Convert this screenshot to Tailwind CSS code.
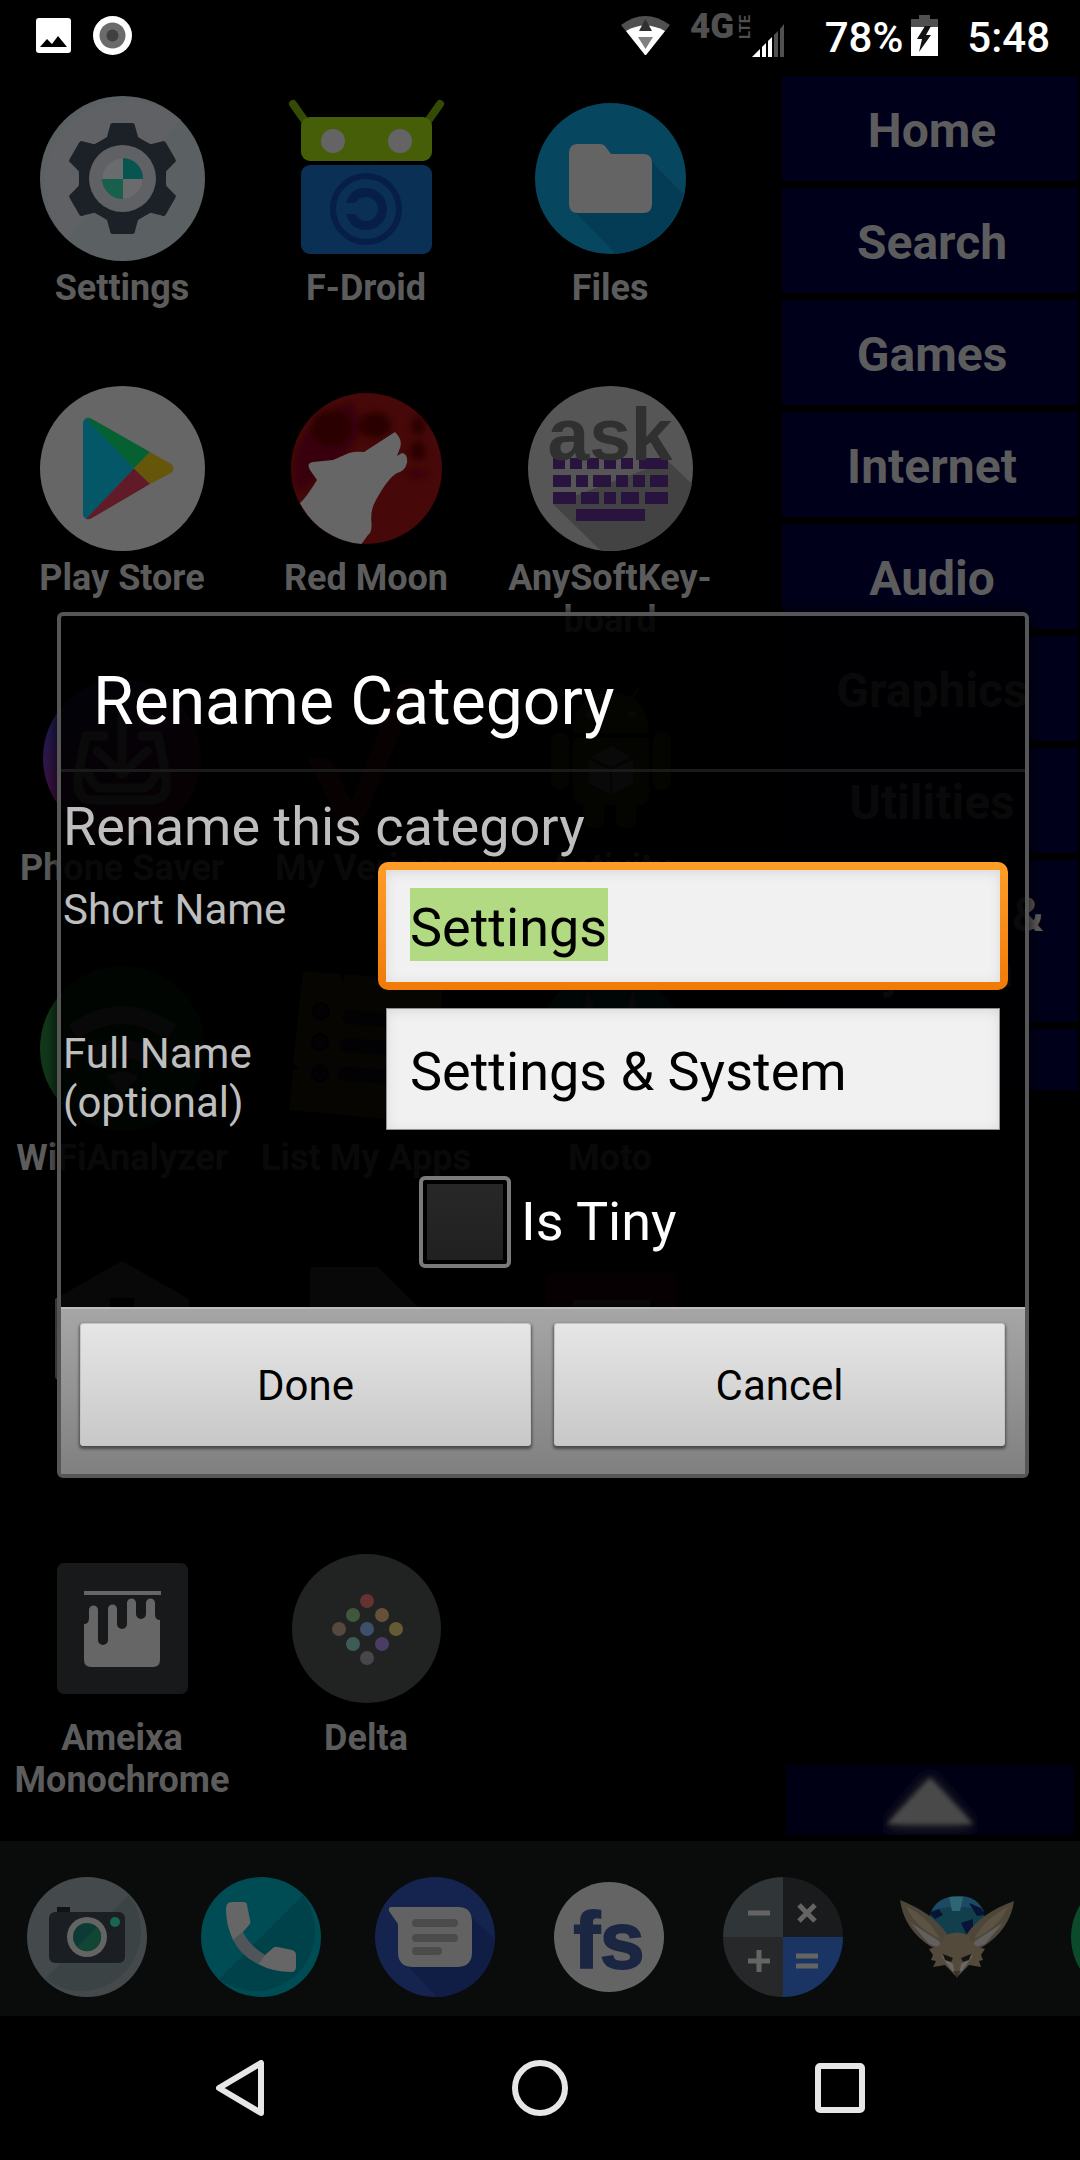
<!DOCTYPE html>
<html lang="en">
<head>
<meta charset="utf-8">
<meta name="viewport" content="width=device-width, initial-scale=1">
<title>Rename Category</title>
<script src="https://cdn.jsdelivr.net/npm/@tailwindcss/browser@4"></script>
</head>
<body class="flex min-h-screen flex-col overflow-x-hidden bg-black font-['Roboto',sans-serif]">

<!-- Status bar -->
<header class="flex h-[74px] shrink-0 items-start justify-between bg-black pr-[30px] pl-9 text-white">
  <div class="flex items-center gap-[22px] pt-4">
    <svg class="size-[35px]" viewBox="0 0 35 35"><rect width="35" height="35" rx="3" fill="#fff"/><path d="M4 29 11 21 16 26 22 18 31 29Z" fill="#000"/></svg>
    <svg class="size-[39px]" viewBox="0 0 39 39"><circle cx="19.500" cy="19.500" r="19.500" fill="#fff"/><circle cx="19.500" cy="19.500" r="13" fill="#6b6b6b"/><circle cx="19.500" cy="19.500" r="6" fill="#404040"/></svg>
  </div>
  <div class="flex items-start">
    <svg class="mt-4 h-[39px] w-[49px]" viewBox="0 0 49 39"><path d="M0 9Q24 -9 49 9L25 39H24Z" fill="#505050"/><path d="M5 15Q24 4 44 15L25 39H24Z" fill="#fff"/><path d="M18 15 24.500 3 31 15Z" fill="#303030"/><path d="M17 21H32L24.500 33Z" fill="#808080"/></svg>
    <svg class="mt-2 ml-[18px] h-[50px] w-[100px]" viewBox="-2 0 100 50"><text x="0" y="30" font-size="35" font-weight="900" fill="#505050">4G</text><text transform="translate(60 31) rotate(-90)" font-size="15" font-weight="700" fill="#505050">LTE</text><path d="M62 49 70 41V49Z M72 39 76 35V49H72Z M78 33 82 29V49H78Z" fill="#fff"/><path d="M84 27 88 23V49H84Z M90 21 94 16V49H90Z" fill="#505050"/></svg>
    <span class="mt-[13px] ml-[37px] text-[42px] leading-[50px] font-medium">78%</span>
    <svg class="mt-[15px] ml-2 h-[41px] w-[27px]" viewBox="0 0 27 41"><path d="M8 0H19V4H27V12H0V4H8Z" fill="#505050"/><path d="M0 12H27V41H0Z" fill="#fff"/><path d="M14 11H20L15 20H20L8 37 11 24H6Z" fill="#111"/></svg>
    <span class="mt-[13px] ml-[29px] text-[42px] leading-[50px] font-medium">5:48</span>
  </div>
</header>

<main class="relative flex flex-1 flex-col">
  <!-- Launcher -->
  <div class="flex flex-1 pt-[2px] pr-[2px]">
    <nav aria-label="Apps" class="mr-[50px] grid flex-1 auto-rows-[290px] grid-cols-3 text-center text-[36px] leading-[42px] font-bold text-[#5c5c5c]">
      <a href="#" class="flex flex-col items-center gap-[6px] pt-5">
        <svg class="size-[165px] shrink-0" viewBox="0 0 165 165"><circle cx="82.500" cy="82.500" r="82.500" fill="#5b6163"/><path d="M27 143A82.500 82.500 0 0 1 141 24Z" fill="#5f6165"/><g fill="#1b2127"><circle cx="82.500" cy="82.500" r="43"/><path id="t" d="M70 30Q70 27 73 27H92Q95 27 95 30L98 41 109 48H56L67 41Z"/><use href="#t" transform="rotate(60 82.500 82.500)"/><use href="#t" transform="rotate(120 82.500 82.500)"/><use href="#t" transform="rotate(180 82.500 82.500)"/><use href="#t" transform="rotate(240 82.500 82.500)"/><use href="#t" transform="rotate(300 82.500 82.500)"/></g><circle cx="82.500" cy="82.500" r="33.500" fill="#5f6164"/><circle cx="82.500" cy="82.500" r="20" fill="#696b6c"/><path d="M83 83V62A20.500 20.500 0 0 1 103 83Z" fill="#085450"/><path d="M83 83V103A20.500 20.500 0 0 1 62 83Z" fill="#185f4c"/></svg>
        Settings</a>
      <a href="#" class="flex flex-col items-center gap-[6px] pt-5">
        <svg class="size-[165px] shrink-0" viewBox="0 0 165 165"><path d="M9 8 21 25M156 8 144 25" stroke="#354a05" stroke-width="8" stroke-linecap="round"/><rect x="17" y="21" width="131" height="44" rx="9" fill="#465e07"/><circle cx="49" cy="45" r="12" fill="#646464"/><circle cx="116" cy="45" r="12" fill="#646464"/><rect x="17" y="69" width="131" height="89" rx="9" fill="#0a3056"/><circle cx="82" cy="113" r="33" fill="none" stroke="#061e48" stroke-width="6"/><path d="M62 107Q66 92 82 92A21 21 0 0 1 82 134Q67 134 62 118H71Q75 125 82 125A12 12 0 0 0 82 101Q75 101 71 107Z" fill="#061e48"/></svg>
        F-Droid</a>
      <a href="#" class="flex flex-col items-center gap-[6px] pt-5">
        <svg class="size-[165px] shrink-0" viewBox="0 0 165 165"><circle cx="82.500" cy="82.500" r="75.500" fill="#06465f"/><path d="M46 115 88 158A75.500 75.500 0 0 0 155 98L124 66Z" fill="#033c54"/><path d="M41 57Q41 48 50 48H72Q75 48 77 50L83 58H115Q124 58 124 67V108Q124 117 115 117H50Q41 117 41 108Z" fill="#646464"/></svg>
        Files</a>

      <a href="#" class="flex flex-col items-center gap-[6px] pt-5">
        <svg class="size-[165px] shrink-0" viewBox="0 0 165 165"><circle cx="82.500" cy="82.500" r="82.500" fill="#666"/><path d="M43 38Q43 33 47 32L94 82.500 47 133Q43 132 43 128Z" fill="#035766"/><path d="M46 32Q49 31 52 33L110 66 94 82.500Z" fill="#056132"/><path d="M110 66 131 78Q136 82 131 87L110 98 94 82.500Z" fill="#65560a"/><path d="M46 133Q49 134 52 132L110 98 94 82.500Z" fill="#611a28"/></svg>
        Play Store</a>
      <a href="#" class="flex flex-col items-center gap-[6px] pt-5">
        <svg class="size-[165px] shrink-0" viewBox="0 0 165 165"><defs><filter id="m" x="-20%" y="-20%" width="140%" height="140%"><feGaussianBlur stdDeviation="3"/></filter></defs><circle cx="82.500" cy="82.500" r="75.500" fill="#460808"/><g filter="url(#m)"><path d="M14 108A68 68 0 0 1 70 17Q72 30 78 42 60 80 30 95Z" fill="#380607"/><g fill="#2b0506"><ellipse cx="47" cy="42" rx="20" ry="18"/><ellipse cx="91" cy="39" rx="16" ry="13"/><ellipse cx="134" cy="40" rx="7" ry="9"/><ellipse cx="134" cy="65" rx="8" ry="10"/></g><ellipse cx="133" cy="88" rx="12" ry="4" fill="#380607"/></g><path d="M16 117Q22 112 33 94L26 84Q22 77 29 76L49 74 65 67Q72 65 80 66L111 46Q119 54 116 62L113 70 118 67Q124 68 123 77 121 85 113 87 104 92 92 114 86 124 87.500 137 88 147 84 149L77.500 158A75.500 75.500 0 0 1 16 117Z" fill="#666"/></svg>
        Red Moon</a>
      <a href="#" class="flex flex-col items-center gap-[6px] pt-5">
        <svg class="size-[165px] shrink-0" viewBox="0 0 165 165"><circle cx="82.500" cy="82.500" r="82.500" fill="#565656"/><path d="M25 118 72 164A82.500 82.500 0 0 0 164 98L140 75Z" fill="#434343"/><path fill="#29133f" d="M25 72H37V83H25ZM42 72H54V83H42ZM59 72H71V83H59ZM76 72H88V83H76ZM93 72H105V83H93ZM111 72H140V83H111ZM25 89H43V101H25ZM48 89H60V101H48ZM65 89H83V101H65ZM88 89H100V101H88ZM105 89H117V101H105ZM122 89H140V101H122ZM25 106H48V118H25ZM53 106H71V118H53ZM76 106H88V118H76ZM93 106H111V118H93ZM117 106H140V118H117ZM48 123H117V135H48Z"/><text x="82" y="74" text-anchor="middle" font-family="Liberation Sans, sans-serif" font-weight="700" font-size="75" fill="#303030">ask</text></svg>
        AnySoftKey-<br>board</a>

      <a href="#" class="flex flex-col items-center gap-[6px] pt-5">
        <svg class="size-[165px] shrink-0" viewBox="0 0 165 165"><defs><linearGradient id="ps" x1="0" y1="0" x2=".6" y2="1"><stop offset=".2" stop-color="#1c1c52"/><stop offset=".6" stop-color="#40103c"/><stop offset="1" stop-color="#48101c"/></linearGradient></defs><circle cx="82" cy="82" r="79" fill="url(#ps)"/><g fill="none" stroke="#666" stroke-width="9" stroke-linecap="round" stroke-linejoin="round"><path d="M82 40V98M57 75 82 98 107 75M64 60H46L38 100Q36 124 52 124H112Q129 124 126 100L118 60H102M40 97H48Q54 112 62 112H102Q110 112 116 97H125"/></g></svg>
        Phone Saver</a>
      <a href="#" class="flex flex-col items-center gap-[6px] pt-5">
        <svg class="size-[165px] shrink-0" viewBox="0 0 165 165"><path d="M23 82H46L67 126 114 8H136L74 158H62Z" fill="#55100f"/></svg>
        My Verizon</a>
      <a href="#" class="flex flex-col items-center gap-[6px] pt-5">
        <svg class="size-[165px] shrink-0" viewBox="0 0 165 165"><g fill="#2c3a0c"><path d="M45 57Q47 17 83 17T121 57Z"/><path d="M45 62H121V117Q121 129 110 129H56Q45 129 45 117Z"/><rect x="23" y="56" width="18" height="58" rx="9"/><rect x="125" y="56" width="18" height="58" rx="9"/><path d="M55 129H76V144Q76 152 66 152T55 144ZM88 129H108V144Q108 152 98 152T88 144Z"/></g><path d="M58 12 66 24M111 12 103 24" stroke="#2c3a0c" stroke-width="3"/><circle cx="62" cy="39" r="4" fill="#555"/><circle cx="104" cy="39" r="4" fill="#555"/><path d="M83 70 103 81 83 91 63 81ZM61 84 82 94V118L61 107ZM105 84 84 94V118L105 107Z" fill="#606060"/></svg>
        Activity Launcher</a>

      <a href="#" class="flex flex-col items-center gap-[6px] pt-5">
        <svg class="size-[165px] shrink-0" viewBox="0 0 165 165"><circle cx="82.500" cy="82.500" r="82.500" fill="#12381a"/><path d="M34 66Q82 32 131 66M52 93Q82 72 113 93" fill="none" stroke="#565656" stroke-width="17"/><path d="M67 111Q82 100 98 111L82 128Z" fill="#565656"/></svg>
        WiFiAnalyzer</a>
      <a href="#" class="flex flex-col items-center gap-[6px] pt-5">
        <svg class="size-[165px] shrink-0" viewBox="0 0 165 165"><path d="M19 5 56 8 59 16 62 8 159 17 148 157 5 144 9 104 15 102 9 98Z" fill="#4e340a"/><g fill="#180f24" stroke="#0c0602" stroke-width="2"><circle cx="37" cy="45" r="8"/><circle cx="36" cy="76" r="8"/><circle cx="36" cy="107" r="8"/></g><path d="M65 51 135 57M63 79 133 85M60 108 130 112" stroke="#180f24" stroke-width="14" stroke-linecap="round"/></svg>
        List My Apps</a>
      <a href="#" class="flex flex-col items-center gap-[6px] pt-5">
        <svg class="size-[165px] shrink-0" viewBox="0 0 165 165"><circle cx="82.500" cy="82.500" r="75.500" fill="#06403f"/><path d="M40 120 60 26 82.500 90 105 26 125 120Z" fill="#555"/></svg>
        Moto</a>

      <a href="#" aria-label="Home app" class="flex flex-col items-center pt-5">
        <svg class="size-[165px] shrink-0" viewBox="0 0 165 165"><path d="M82 5 149 43V120Q149 124 145 124H19Q15 124 15 120V43Z" fill="#565656"/><path d="M70 42H94V80H70Z" fill="#000"/></svg></a>
      <a href="#" aria-label="Document app" class="flex flex-col items-center pt-5">
        <svg class="size-[165px] shrink-0" viewBox="0 0 165 165"><path d="M26 15Q26 11 30 11H94L137 54V150H26Z" fill="#565656"/></svg></a>
      <a href="#" aria-label="Notes app" class="flex flex-col items-center pt-5">
        <svg class="size-[165px] shrink-0" viewBox="0 0 165 165"><rect x="18" y="17" width="130" height="131" rx="6" fill="#4a0614"/><path d="M45 44H122V50H45Z" fill="#565656"/></svg></a>

      <a href="#" class="flex flex-col items-center gap-[6px] pt-5">
        <svg class="size-[165px] shrink-0" viewBox="0 0 165 165"><rect x="17" y="17" width="131" height="131" rx="7" fill="#17191b"/><path d="M44 45H121V49H44ZM44 78Q49 78 49 72V64A4.500 4.500 0 0 1 58 64V94A5 5 0 0 0 68 94V63A4.500 4.500 0 0 1 77 63V78A5 5 0 0 0 87 78V57A4.500 4.500 0 0 1 96 57V68A5 5 0 0 0 106 68V57A4.500 4.500 0 0 1 115 57V68Q115 74 120 74V114Q120 121 113 121H51Q44 121 44 114Z" fill="#666"/></svg>
        Ameixa Monochrome</a>
      <a href="#" class="flex flex-col items-center gap-[6px] pt-5">
        <svg class="size-[165px] shrink-0" viewBox="0 0 165 165"><circle cx="82.500" cy="82.500" r="74.500" fill="#212322"/><circle cx="83" cy="55" r="7" fill="#643230"/><circle cx="69" cy="69" r="7" fill="#3f583b"/><circle cx="98" cy="69" r="7" fill="#65503a"/><circle cx="55" cy="83" r="7" fill="#54493f"/><circle cx="83" cy="83" r="7" fill="#3f4f6b"/><circle cx="112" cy="83" r="7" fill="#655b32"/><circle cx="69" cy="98" r="7" fill="#3e5b56"/><circle cx="98" cy="98" r="7" fill="#4b3c64"/><circle cx="83" cy="112" r="7" fill="#47474b"/></svg>
        Delta</a>
    </nav>

    <aside aria-label="Categories" class="flex w-[296px] shrink-0 flex-col text-[48px] leading-[56px] font-bold text-[#5c5c5c]">
      <div class="flex flex-col gap-[7px]">
        <button class="h-[105px] bg-[#00001b] pt-1 pl-1">Home</button>
        <button class="h-[105px] bg-[#00001b] pt-1 pl-1">Search</button>
        <button class="h-[105px] bg-[#00001b] pt-1 pl-1">Games</button>
        <button class="h-[105px] bg-[#00001b] pt-1 pl-1">Internet</button>
        <button class="h-[105px] bg-[#00001b] pt-1 pl-1">Audio</button>
        <button class="h-[105px] bg-[#00001b] pt-1 pl-1">Graphics</button>
        <button class="h-[105px] bg-[#00001b] pt-1 pl-1">Utilities</button>
        <button class="h-[162px] bg-[#00001b] pt-1 pl-1">Settings &amp;<br>System</button>
        <button aria-label="Next category" class="h-[61px] bg-[#00001b]"></button>
      </div>
      <button aria-label="Scroll up" class="mx-1 mt-auto mb-[6px] flex h-[70px] justify-center bg-[#000015]">
        <svg class="h-[70px] w-[94px]" viewBox="0 0 94 70"><defs><filter id="g" x="-30%" y="-30%" width="160%" height="160%"><feGaussianBlur stdDeviation="7"/></filter><filter id="s" x="-10%" y="-10%" width="120%" height="120%"><feGaussianBlur stdDeviation="2"/></filter></defs><path d="M47 10 92 62H2Z" fill="#333" filter="url(#g)"/><path d="M47 13 90 59H4Z" fill="#494949" filter="url(#s)"/></svg>
      </button>
    </aside>
  </div>

  <!-- Dock -->
  <nav aria-label="Dock" class="flex h-[175px] shrink-0 items-center gap-[54px] overflow-hidden bg-[#0a0c0b] pt-4 pl-[27px]">
    <a href="#" aria-label="Camera" class="shrink-0"><svg class="size-[120px]" viewBox="0 0 120 120"><circle cx="60" cy="60" r="60" fill="#44494c"/><path d="M18 102A60 60 0 0 0 102 18Z" fill="#3c4345"/><path d="M30 30H43V36H30Z" fill="#101214"/><rect x="22" y="35" width="76" height="51" rx="6" fill="#1b1f24"/><circle cx="60" cy="60" r="20" fill="#646464"/><circle cx="60" cy="60" r="14" fill="#0c3b36"/><path d="M50 70A14 14 0 0 0 70 50Z" fill="#124634"/><circle cx="88" cy="45" r="5" fill="#18664f"/></svg></a>
    <a href="#" aria-label="Phone" class="shrink-0"><svg class="size-[120px]" viewBox="0 0 120 120"><circle cx="60" cy="60" r="60" fill="#004c55"/><path d="M18 102A60 60 0 0 0 102 18Z" fill="#00424a"/><path d="M32 63 42 55Q48 68 64 78L57 87Q40 79 32 63Z" fill="#50555a"/><path d="M25 32Q25 25 31 25H42Q46 25 46 28L49 43Q50 46 48 48L42 55 32 63Q25 48 25 32ZM64 78 72 71Q74 69 77 70L91 73Q95 74 95 78V90Q95 95 90 95 72 95 57 87Z" fill="#666"/></svg></a>
    <a href="#" aria-label="Messages" class="shrink-0"><svg class="size-[120px]" viewBox="0 0 120 120"><circle cx="60" cy="60" r="60" fill="#14244f"/><path d="M30 86 62 120A60 60 0 0 0 120 62L96 40Z" fill="#101d45"/><path d="M16 30H83Q97 30 97 45V75Q97 90 82 90H38Q23 90 23 75V47L14 34Q13 30 16 30Z" fill="#626262"/><path d="M41 46H79M41 61H79M41 74H63" stroke="#4b4b4b" stroke-width="8" stroke-linecap="round"/></svg></a>
    <a href="#" aria-label="Files share" class="shrink-0"><svg class="size-[120px]" viewBox="0 0 120 120"><circle cx="60" cy="60" r="55" fill="#646464"/><text x="60" y="91" text-anchor="middle" font-family="Liberation Sans, sans-serif" font-weight="700" font-size="80" fill="#1b2643" stroke="#1b2643" stroke-width="2">fs</text></svg></a>
    <a href="#" aria-label="Calculator" class="shrink-0"><svg class="size-[120px]" viewBox="0 0 120 120"><path d="M60 60V0A60 60 0 0 0 0 60Z" fill="#303538"/><path d="M60 60V0A60 60 0 0 1 120 60Z" fill="#191b1d"/><path d="M60 60V120A60 60 0 0 1 0 60Z" fill="#262829"/><path d="M60 60V120A60 60 0 0 0 120 60Z" fill="#1a3563"/><path d="M25 36H47M25 84H47M36 73V95M73 79H95M73 89H95M76 28 92 44M92 28 76 44" stroke="#646464" stroke-width="5"/></svg></a>
    <a href="#" aria-label="Browser" class="shrink-0"><svg class="size-[120px]" viewBox="0 0 120 120"><circle cx="60" cy="48" r="29" fill="#123f4c"/><path d="M34 35Q40 20 60 19T87 35Q80 30 60 30T34 35Z" fill="#1c4a64"/><path d="M52 20H66L63 34H55Z" fill="#2f6673"/><path d="M72 26 84 31 88 38 80 39ZM64 46 76 42 76 52 70 58ZM32 36 42 32 46 38 38 42Z" fill="#071436"/><path d="M3 23Q7 52 33 69L44 75 50 57Q36 36 3 23ZM117 24Q113 52 87 69L76 75 70 57Q84 36 117 24Z" fill="#4e4639"/><path d="M9 29Q18 50 43 62 33 42 9 29ZM111 30Q102 50 77 62 87 42 111 30Z" fill="#5c5344"/><path d="M14 46 42 64 46 72 32 67ZM106 46 78 64 74 72 88 67Z" fill="#61605f"/><path d="M32 72Q45 70 49 58 60 53 71 58 75 70 88 72L84 78 86 83 82 84 84 90 72 88 60 100 48 88 36 90 39 84 34 83 36 78Z" fill="#544a3c"/><path d="M44 78 56 87 58 98 50 87ZM76 78 64 87 62 98 70 87Z" fill="#6a6763"/><path d="M46 77 56 81 54 85 48 83ZM74 77 64 81 66 85 72 83Z" fill="#14140f"/><path d="M56 94H64L60 101Z" fill="#40352c"/></svg></a>
    <a href="#" aria-label="More" class="shrink-0"><svg class="size-[120px]" viewBox="0 0 120 120"><circle cx="60" cy="60" r="60" fill="#0b4a2a"/></svg></a>
  </nav>

  <!-- Dialog -->
  <div class="absolute inset-0 flex items-center pr-[51px] pl-[57px]">
    <form role="dialog" aria-labelledby="title" class="w-full rounded-[6px] border-4 border-[#565656] bg-black/90 shadow-[0_0_10px_4px_rgba(0,0,0,0.5)]">
      <h1 id="title" class="border-b-[3px] border-[#1a1a1a] pt-[47px] pb-[28px] pl-8 text-[66px] leading-[78px] text-white">Rename Category</h1>
      <p class="mt-[23px] pl-[2px] text-[54px] leading-[64px] text-[#bebebe]">Rename this category</p>
      <div class="mt-[3px] grid grid-cols-[315px_minmax(0,1fr)] gap-y-[18px] pr-[17px] pl-[2px] text-[42px] leading-[49px] text-[#bebebe]">
        <label for="short" class="pt-[23px]">Short Name</label>
        <div class="rounded-[10px] bg-linear-to-b from-[#ff9d27] to-[#f07a06] p-[8px]">
          <input id="short" type="text" value="Settings" autofocus class="block h-[112px] w-full bg-[#f1f1f1] bg-no-repeat px-6 pt-[2px] text-[54px] leading-[73px] text-black inset-shadow-[0_2px_12px_#d8d8d8] outline-none selection:bg-[#b1da82fe] selection:text-black focus:bg-[linear-gradient(#b1da82,#b1da82)] focus:bg-[size:198px_73px] focus:bg-[position:24px_18px]">
        </div>
        <label for="full" class="pt-[21px]">Full Name<br>(optional)</label>
        <input id="full" type="text" value="Settings &amp; System" class="mx-2 h-[122px] min-w-0 border border-[#909090] bg-[#f1f1f1] px-[23px] pt-1 text-[54px] leading-[73px] text-black inset-shadow-[0_2px_12px_#d8d8d8] outline-none">
      </div>
      <label class="mt-[46px] flex items-center gap-[10px] pl-[358px] text-[54px] leading-[64px] text-white">
        <input type="checkbox" class="size-[92px] appearance-none rounded-[6px] border-4 border-[#7a7a7a] bg-linear-to-b from-[#282828] to-[#202020] inset-shadow-[0_0_0_4px_#000]">
        Is Tiny
      </label>
      <div class="mt-[39px] grid grid-cols-2 gap-[23px] border-t-2 border-[#bdbdbd] bg-linear-to-b from-[#a6a6a6] to-[#808080] pt-[14px] pr-5 pb-7 pl-[19px] text-[42px] leading-[49px] text-black">
        <button type="button" class="h-[123px] rounded-[3px] border border-[#c4c4c4] bg-linear-to-b from-[#e6e6e6] to-[#c8c8c8] pt-[2px] shadow-[0_2px_3px_1px_rgba(0,0,0,0.45)]">Done</button>
        <button type="button" class="h-[123px] rounded-[3px] border border-[#c4c4c4] bg-linear-to-b from-[#e6e6e6] to-[#c8c8c8] pt-[2px] shadow-[0_2px_3px_1px_rgba(0,0,0,0.45)]">Cancel</button>
      </div>
    </form>
  </div>
</main>

<!-- System navigation -->
<nav aria-label="System" class="grid h-[144px] shrink-0 grid-cols-[1fr_300px_1fr] items-center bg-black">
  <button aria-label="Back" class="justify-self-end pr-[126px]"><svg class="h-[56px] w-[48px]" viewBox="0 0 48 56"><path d="M45 3V53L3 28Z" fill="none" stroke="#e6e6e6" stroke-width="6" stroke-linejoin="round"/></svg></button>
  <button aria-label="Home" class="justify-self-center"><svg class="size-[56px]" viewBox="0 0 56 56"><circle cx="28" cy="28" r="25" fill="none" stroke="#e6e6e6" stroke-width="6"/></svg></button>
  <button aria-label="Recents" class="justify-self-start pl-[125px]"><svg class="size-[50px]" viewBox="0 0 50 50"><rect x="3" y="3" width="44" height="44" rx="2" fill="none" stroke="#e6e6e6" stroke-width="6"/></svg></button>
</nav>

<script>
  document.getElementById('short').focus();
  document.getElementById('short').select();
</script>
</body>
</html>
